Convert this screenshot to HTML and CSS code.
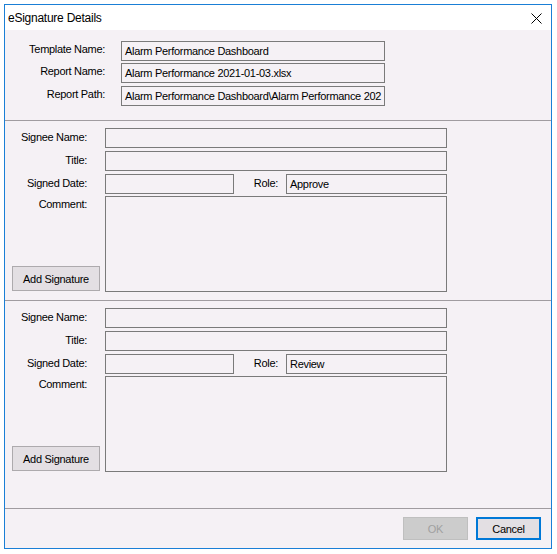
FILE: index.html
```html
<!DOCTYPE html>
<html>
<head>
<meta charset="utf-8">
<title>eSignature Details</title>
<link rel="stylesheet" href="styles.css">
</head>
<body>
<div class="window">
  <div class="titlebar">
    <span class="title">eSignature Details</span>
    <svg class="close" width="11" height="11" viewBox="0 0 11 11"><path d="M0.5 0.5 L10.5 10.5 M10.5 0.5 L0.5 10.5" stroke="#000" stroke-width="1" fill="none"/></svg>
  </div>
  <div class="client">
    <div class="info">
      <div class="info-row"><span class="info-label">Template Name:</span><div class="field info-field">Alarm Performance Dashboard</div></div>
      <div class="info-row"><span class="info-label">Report Name:</span><div class="field info-field">Alarm Performance 2021-01-03.xlsx</div></div>
      <div class="info-row"><span class="info-label">Report Path:</span><div class="field info-field">Alarm Performance Dashboard\Alarm Performance 202</div></div>
    </div>
    <div class="sep"></div>
    <div class="sig">
      <span class="sig-label">Signee Name:</span><div class="field"></div>
      <span class="sig-label">Title:</span><div class="field"></div>
      <span class="sig-label">Signed Date:</span>
      <div class="date-row"><div class="field date-field"></div><span class="role-label">Role:</span><div class="field role-field">Approve</div></div>
      <div class="comment-cell"><span class="comment-label">Comment:</span><button class="btn add-btn">Add Signature</button></div>
      <div class="field comment"></div>
    </div>
    <div class="sep"></div>
    <div class="sig sig-last">
      <span class="sig-label">Signee Name:</span><div class="field"></div>
      <span class="sig-label">Title:</span><div class="field"></div>
      <span class="sig-label">Signed Date:</span>
      <div class="date-row"><div class="field date-field"></div><span class="role-label">Role:</span><div class="field role-field">Review</div></div>
      <div class="comment-cell"><span class="comment-label">Comment:</span><button class="btn add-btn">Add Signature</button></div>
      <div class="field comment"></div>
    </div>
    <div class="sep"></div>
    <div class="footer">
      <button class="btn ok" disabled>OK</button>
      <button class="btn cancel">Cancel</button>
    </div>
  </div>
</div>
</body>
</html>
```

FILE: styles.css
```css
* { box-sizing: border-box; }
html, body { margin: 0; padding: 0; background: #ffffff; }
body {
  font-family: "Liberation Sans", Arial, sans-serif;
  font-size: 11px;
  letter-spacing: -0.3px;
  color: #000;
}
.window {
  margin: 4px 0 0 4px;
  width: 548px;
  height: 545px;
  border: 1px solid #1a7fd6;
  display: flex;
  flex-direction: column;
  background: #f5f1f5;
}
.titlebar {
  height: 25px;
  background: #ffffff;
  display: flex;
  align-items: center;
  justify-content: space-between;
  padding: 0 9px 0 3px;
}
.title {
  font-size: 12px;
  letter-spacing: -0.25px;
}
.close { display: block; margin-top: 1px; }
.client {
  flex: 1;
  display: flex;
  flex-direction: column;
}
.info {
  padding: 11px 0 14px;
  display: flex;
  flex-direction: column;
  gap: 2px;
}
.info-row {
  display: flex;
  align-items: flex-start;
  gap: 16px;
  height: 20px;
}
.info-row:nth-child(3) { margin-top: 1px; }
.info-label {
  width: 100px;
  text-align: right;
  line-height: 16px;
}
.field {
  height: 20px;
  border: 1px solid #7a7a7a;
  background: #f5f1f5;
  padding: 0 3px;
  line-height: 18px;
  white-space: nowrap;
  overflow: hidden;
}
.info-field { width: 264px; }
.sep {
  height: 1px;
  background: #a09ca0;
}
.sig {
  display: grid;
  grid-template-columns: 100px 342px;
  grid-template-rows: 20px 20px 20px 95px;
  row-gap: 3px;
  padding: 7px 0 8px;
}
.sig-last { padding-bottom: 36px; }
.sig .comment-cell, .sig .comment { margin-top: -1px; }
.sig-label {
  text-align: right;
  padding-right: 18px;
  line-height: 18px;
}
.date-row {
  display: flex;
  align-items: flex-start;
}
.date-field { width: 129px; }
.role-label {
  width: 52px;
  text-align: right;
  padding-right: 8px;
  line-height: 18px;
}
.role-field { flex: 1; }
.comment { height: 96px; }
.comment-cell {
  display: flex;
  flex-direction: column;
  justify-content: space-between;
  align-items: flex-start;
  height: 96px;
  padding-bottom: 1px;
}
.comment-label {
  align-self: stretch;
  text-align: right;
  padding-right: 18px;
  line-height: 14px;
  margin-top: 1px;
}
.btn {
  font-family: "Liberation Sans", Arial, sans-serif;
  font-size: 11px;
  letter-spacing: -0.3px;
  color: #000;
  background: #e3dfe3;
  border: 1px solid #adaaad;
  padding: 0;
  margin: 0;
}
.add-btn {
  width: 88px;
  height: 25px;
  margin-left: 7px;
}
.footer {
  flex: 1;
  display: flex;
  justify-content: flex-end;
  align-items: flex-start;
  gap: 8px;
  padding: 8px 10px 0 0;
}
.ok, .cancel {
  width: 65px;
  height: 23px;
}
.ok {
  background: #cccccc;
  border-color: #bfbfbf;
  color: #a0a0a0;
}
.cancel {
  border: 2px solid #0078d7;
  background: #e3dfe3;
}
```
